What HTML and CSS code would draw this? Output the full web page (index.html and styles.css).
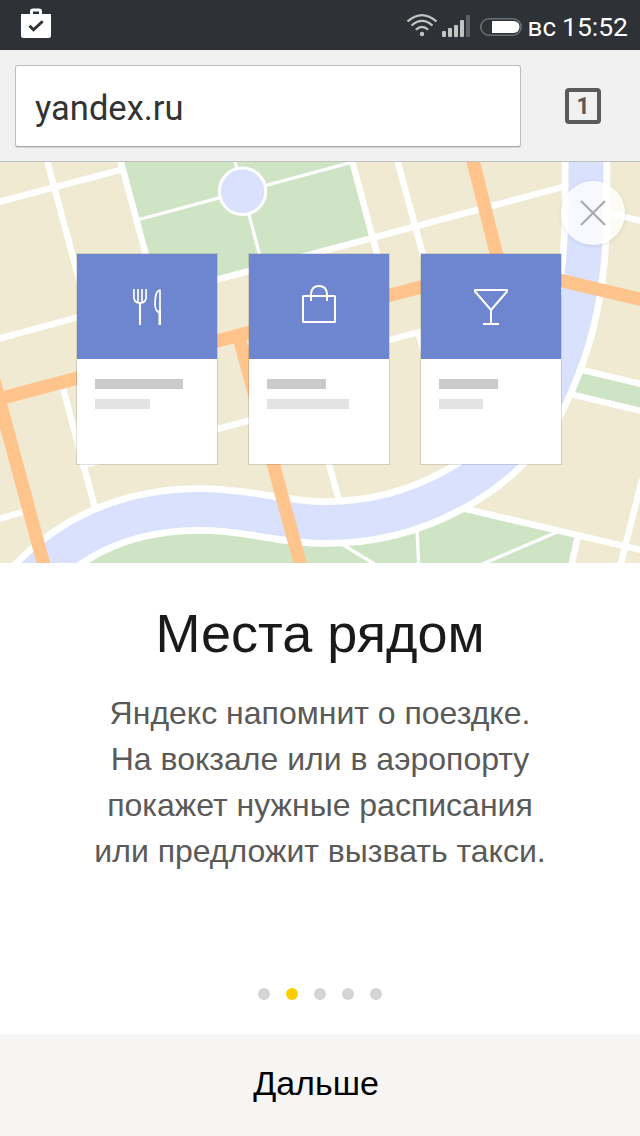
FILE: index.html
```html
<!DOCTYPE html>
<html lang="ru">
<head>
<meta charset="utf-8">
<title>Места рядом</title>
<link rel="stylesheet" href="styles.css">
</head>
<body>
<div class="screen">
  <header class="status">
    <svg class="status-bag" width="32" height="32" viewBox="20 7 32 32">
      <path fill="#fff" fill-rule="evenodd" d="M21 14H30V11.500Q30 8.500 33 8.500H39Q42 8.500 42 11.500V14H51V35.500Q51 38 48.500 38H23.500Q21 38 21 35.500ZM33 14H39V11.500H33Z"/>
      <path fill="none" stroke="#2e3135" stroke-width="2.900" d="M29.500 25.800L33.500 29.800L42.700 21.200"/>
    </svg>
    <svg class="status-icons" width="116" height="50" viewBox="405 0 116 50">
      <g fill="none" stroke="#c4c4c4" stroke-width="2.200">
        <path d="M406.500 21.500Q421 8.800 435.500 21.500"/>
        <path d="M410.500 25.500Q421 16.300 431.500 25.500"/>
        <path d="M414.800 29.800Q421 24 427.200 29.800"/>
      </g>
      <circle cx="421" cy="34" r="2.200" fill="#c4c4c4"/>
      <g fill="#c4c4c4">
        <rect x="441" y="31" width="4" height="6" rx="1"/>
        <rect x="447" y="28" width="4" height="9" rx="1"/>
        <rect x="453" y="25" width="4" height="12" rx="1"/>
        <rect x="459" y="20" width="4" height="17" rx="1"/>
      </g>
      <rect x="465" y="15" width="4" height="22" rx="1" fill="#5f6265"/>
      <rect x="479.800" y="18.800" width="40.400" height="16.400" rx="8.200" fill="none" stroke="#6d7073" stroke-width="1.600"/>
      <path fill="#fff" d="M491 21H512.500Q518.500 21.500 518.500 27T512.500 33H491Z"/>
    </svg>
    <span class="day">вс</span>
    <span class="clock">15:52</span>
  </header>

  <nav class="toolbar">
    <div class="address">yandex.ru</div>
    <div class="tabs">1</div>
  </nav>

  <section class="hero">
    <svg class="map" width="640" height="401" viewBox="0 162 640 401">
      <rect y="162" width="640" height="401" fill="#f0ead2"/>
      <g fill="#cfe4c5">
        <path d="M121 162H352L372 239L157 298Z"/>
        <path d="M29 580L100 530L200 510L326 524L440 500L470 510L577 536L570 570Z"/>
        <path d="M575 368L640 384V411L560 392Z"/>
      </g>
      <g class="road">
        <path d="M-5 203L120 170M45 153L84 298M118.500 153L158 300M-5 339.700L90 314M120 305.500L570 185"/>
        <path d="M350 153L380 265M395.300 153L426 266M380 342.500L425 330.500M418.500 332L430 375"/>
        <path d="M63.300 389L95 508M80 466.500L262 417M318 424L339 500M-5 520L25 511.500"/>
        <path d="M604 211.500L645 222M578 369L645 385M570 394L645 412M465 508.800L645 551M577.500 538L571 567M642 479.500L620 567"/>
      </g>
      <g class="path">
        <path d="M139 219.500L353 162M233 154L262 264M340 543L377 565.500M417 530L418.700 565M556 532.500L480 565"/>
      </g>
      <circle cx="242.500" cy="191.300" r="23.200" fill="#d9e1fc" stroke="#fff" stroke-width="3"/>
      <path class="bank" d="M586 150V205C586 275 576 340 541 407C505 472 420 522.500 326 522.500C280 522.500 250 509.500 200 509.500C130 509.500 75 533 29 580"/>
      <path class="river" d="M586 150V205C586 275 576 340 541 407C505 472 420 522.500 326 522.500C280 522.500 250 509.500 200 509.500C130 509.500 75 533 29 580"/>
      <path class="highway" d="M0 398.500L500 266L645 300.500M471 153L500 268M-12 358L45.500 571M239.800 340L302.500 572"/>
    </svg>

    <div class="cards">
      <article class="card">
        <div class="card-top">
          <svg width="140" height="105" viewBox="77 254 140 105">
            <g class="glyph"><path stroke-width="1.700" d="M133.900 289V297Q133.900 303 140 303T146.100 297V289M138 289V303M142 289V303"/><path d="M140 302V325"/><path stroke-width="1.700" d="M160 311V290C156.500 290.500 155 297 155 304Q155 311 159.500 313"/></g>
            <rect x="158.500" y="310" width="2.500" height="15" fill="#fff"/>
          </svg>
        </div>
        <div class="card-body"><i class="bar bar-88"></i><i class="bar light bar-55"></i></div>
      </article>
      <article class="card">
        <div class="card-top">
          <svg width="140" height="105" viewBox="249 254 140 105">
            <g class="glyph"><rect x="303" y="296" width="32" height="26" rx=".5"/><path d="M311 301V294Q311.500 286 319 286T327 294V301"/></g>
          </svg>
        </div>
        <div class="card-body"><i class="bar bar-59"></i><i class="bar light bar-82"></i></div>
      </article>
      <article class="card">
        <div class="card-top">
          <svg width="140" height="105" viewBox="421 254 140 105">
            <g class="glyph"><path d="M475 290H507V291.500L491 310L475 291.500ZM491 310V324M483 324H499"/></g>
          </svg>
        </div>
        <div class="card-body"><i class="bar bar-59"></i><i class="bar light bar-44"></i></div>
      </article>
    </div>

    <div class="close">
      <svg width="64" height="64" viewBox="0 0 64 64"><path d="M20 20L44 44M44 20L20 44" stroke="#a9a9ab" stroke-width="2"/></svg>
    </div>
  </section>

  <main class="content">
    <h1 class="title">Места рядом</h1>
    <p class="text">Яндекс напомнит о поездке.<br>На вокзале или в аэропорту<br>покажет нужные расписания<br>или предложит вызвать такси.</p>
    <div class="dots"><i class="dot"></i><i class="dot active"></i><i class="dot"></i><i class="dot"></i><i class="dot"></i></div>
  </main>

  <footer class="next">Дальше</footer>
</div>
</body>
</html>
```
FILE: styles.css
```css
* { box-sizing: border-box; }
body { margin: 0; background: #fff; font-family: "Liberation Sans", Arial, sans-serif; }
svg { display: block; }
.screen { width: 640px; height: 1136px; display: flex; flex-direction: column; overflow: hidden; }

.status { height: 50px; flex: none; display: flex; align-items: center; padding: 0 12px 0 20px; background: #2e3135; color: #fff; font-family: Roboto, sans-serif; }
.status-bag { margin-bottom: 4px; }
.status-icons { margin-left: auto; }
.day { margin-left: 6px; font-size: 26px; line-height: 50px; padding-top: 3px; }
.clock { margin-left: 6px; font-size: 26.5px; line-height: 50px; padding-top: 4px; }

.toolbar { height: 112px; flex: none; display: flex; align-items: flex-start; padding: 15px 39px 0 15px; background: #f1f1f1; border-bottom: 1px solid #c0c0c0; }
.address { width: 506px; height: 82px; padding-left: 19px; background: #fff; border: 1px solid #bdbdbd; border-bottom-color: #a8a8a8; border-radius: 3px; box-shadow: 0 1px 1px rgba(0,0,0,.12); color: #333; font: 34.5px/84px Roboto, sans-serif; }
.tabs { width: 36px; height: 36px; margin: 23px 0 0 auto; border: 4px solid #5a5a5a; border-radius: 4px; color: #5a5a5a; font: bold 23px/30px Roboto, sans-serif; text-align: center; }

.hero { position: relative; height: 401px; flex: none; padding: 92px 0 0 77px; }
.map { position: absolute; left: 0; top: 0; }
.road, .path, .bank, .river, .highway { fill: none; stroke: #fff; }
.road { stroke-width: 6.4; }
.path { stroke-width: 3.3; }
.bank { stroke-width: 48.6; }
.river { stroke: #d9e1fc; stroke-width: 35; }
.highway { stroke: #ffc38c; stroke-width: 13.2; }

.cards { position: relative; display: flex; gap: 32px; }
.card { width: 140px; height: 210px; background: #fff; box-shadow: 0 0 0 1px rgba(0,0,0,.12); }
.card-top { height: 105px; background: #6e85cf; }
.glyph { fill: none; stroke: #fff; stroke-width: 2; stroke-linejoin: round; }
.card-body { display: flex; flex-direction: column; gap: 10px; padding: 20px 18px; }
.bar { height: 10px; background: #cacaca; }
.light { background: #e3e3e3; }
.bar-88 { width: 88px; }
.bar-82 { width: 82px; }
.bar-59 { width: 59px; }
.bar-55 { width: 55px; }
.bar-44 { width: 44px; }
.close { position: absolute; left: 561px; top: 19px; width: 64px; height: 64px; border-radius: 50%; background: rgba(255,255,255,.8); box-shadow: 0 1px 4px rgba(0,0,0,.1); }

.content { height: 471px; flex: none; display: flex; flex-direction: column; align-items: center; padding-top: 38px; text-align: center; }
.title { margin: 0; font-size: 54px; line-height: 64px; font-weight: 400; color: #1a1a1a; }
.text { margin: 25px 0 0; font-size: 32px; line-height: 46px; color: #5a5a5a; }
.dots { display: flex; gap: 16px; margin-top: 114px; }
.dot { width: 12px; height: 12px; border-radius: 50%; background: #d5d5d5; }
.active { background: #ffcc00; }
.next { height: 102px; flex: none; padding-right: 8px; background: #f6f5f3; color: #000; font-size: 34px; line-height: 98px; text-align: center; }
```
